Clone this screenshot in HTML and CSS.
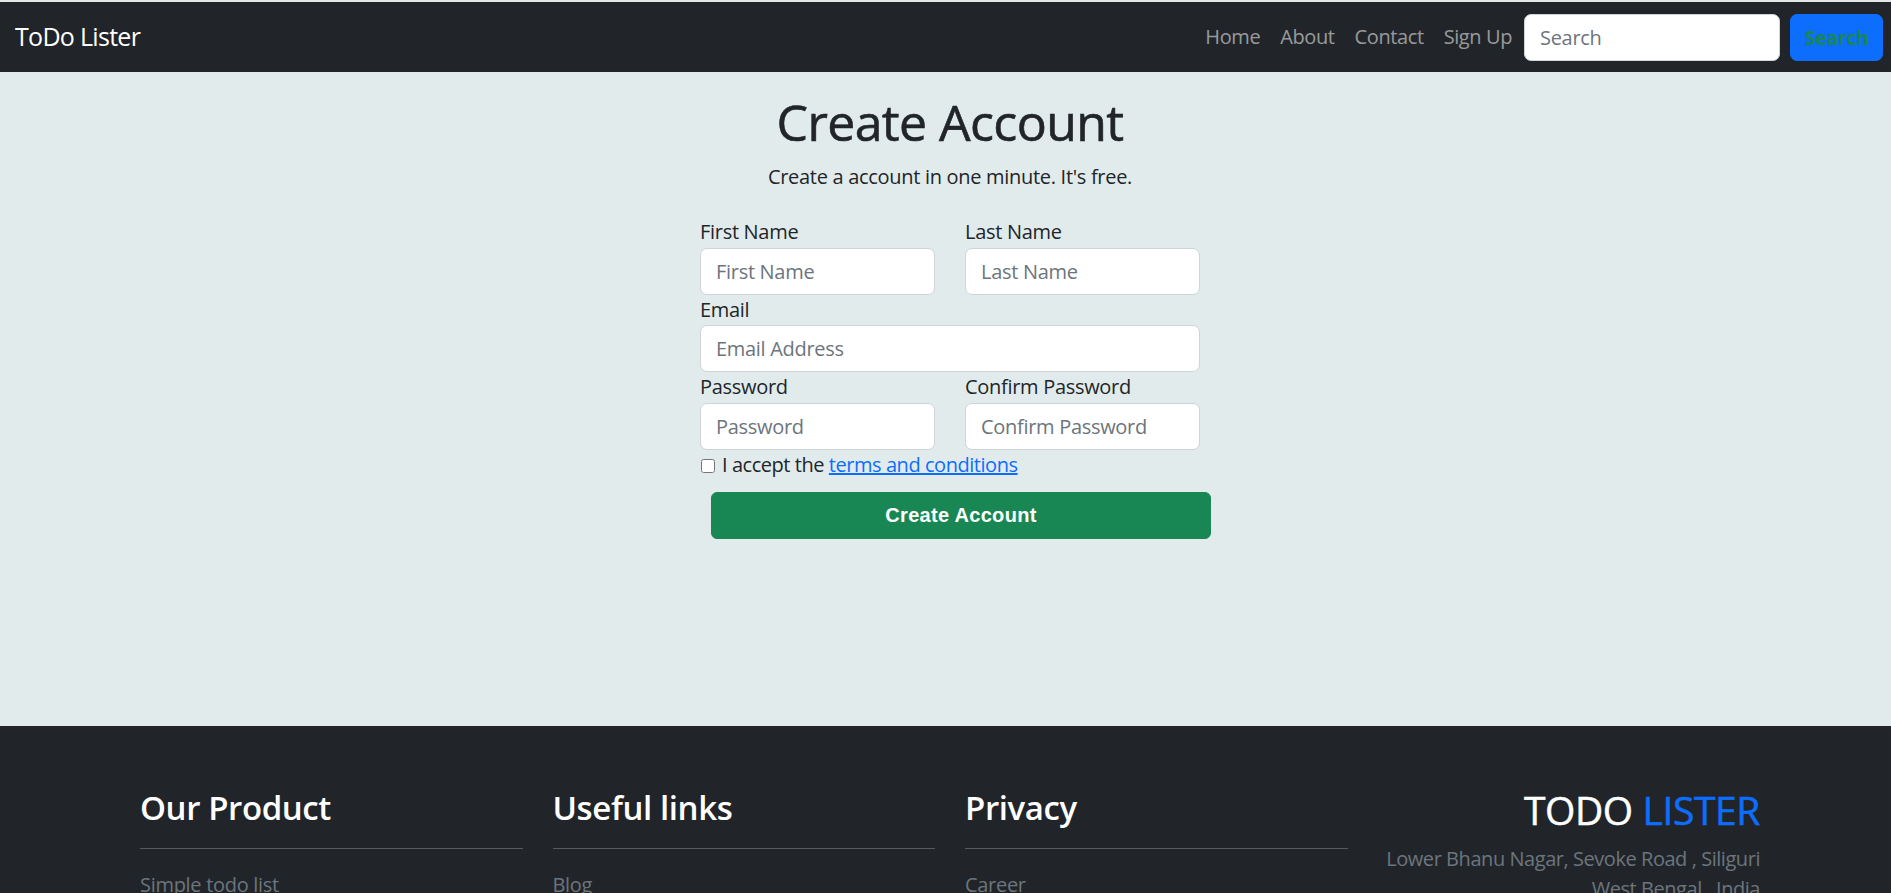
FILE: index.html
```html
<!DOCTYPE html>
<html lang="en">
<head>
<meta charset="utf-8">
<title>Sign Up - ToDo Lister</title>
<link rel="stylesheet" href="styles.css">
</head>
<body>
<div class="page">
  <nav class="navbar">
    <a class="brand" href="#">ToDo Lister</a>
    <div class="nav-right">
      <ul class="nav-links">
        <li><a href="#">Home</a></li>
        <li><a href="#">About</a></li>
        <li><a href="#">Contact</a></li>
        <li><a href="#">Sign Up</a></li>
      </ul>
      <form class="search">
        <input class="search-input" type="search" placeholder="Search">
        <button class="search-btn" type="button">Search</button>
      </form>
    </div>
  </nav>

  <main class="main">
    <h1 class="title">Create Account</h1>
    <p class="subtitle">Create a account in one minute. It's free.</p>
    <form class="signup">
      <div class="row">
        <div class="field">
          <label class="label">First Name</label>
          <input class="input" type="text" placeholder="First Name">
        </div>
        <div class="field">
          <label class="label">Last Name</label>
          <input class="input" type="text" placeholder="Last Name">
        </div>
      </div>
      <div class="field">
        <label class="label">Email</label>
        <input class="input" type="email" placeholder="Email Address">
      </div>
      <div class="row">
        <div class="field">
          <label class="label">Password</label>
          <input class="input" type="password" placeholder="Password">
        </div>
        <div class="field">
          <label class="label">Confirm Password</label>
          <input class="input" type="password" placeholder="Confirm Password">
        </div>
      </div>
      <div class="check">
        <input class="checkbox" type="checkbox">
        <span>I accept the <a class="terms" href="#">terms and conditions</a></span>
      </div>
      <button class="submit" type="button">Create Account</button>
    </form>
  </main>

  <footer class="footer">
    <div class="footer-inner">
      <div class="fcol">
        <h3 class="fhead">Our Product</h3>
        <hr class="fline">
        <ul class="flist">
          <li>Simple todo list</li>
          <li>Notes</li>
        </ul>
      </div>
      <div class="fcol">
        <h3 class="fhead">Useful links</h3>
        <hr class="fline">
        <ul class="flist">
          <li>Blog</li>
          <li>Help</li>
        </ul>
      </div>
      <div class="fcol">
        <h3 class="fhead">Privacy</h3>
        <hr class="fline">
        <ul class="flist">
          <li>Career</li>
          <li>Terms</li>
        </ul>
      </div>
      <div class="fcol fbrand">
        <h2 class="logo">TODO <span class="logo-blue">LISTER</span></h2>
        <p class="address">Lower Bhanu Nagar, Sevoke Road , Siliguri<br>West Bengal , India</p>
      </div>
    </div>
  </footer>
</div>
</body>
</html>
```

FILE: styles.css
```css
html {
  overflow: hidden;
}

body {
  margin: 0;
  font-family: "Open Sans", "Noto Sans", sans-serif;
  font-size: 20px;
  line-height: 1.5;
  letter-spacing: -0.3px;
  color: #212529;
  background: #e2ebec;
}

.page {
  width: 1900px;
}

/* ---------- navbar ---------- */
.navbar {
  box-sizing: border-box;
  height: 72px;
  border-top: 2px solid #e4e6e8;
  background: #212529;
  display: flex;
  align-items: center;
  justify-content: space-between;
  padding: 0 17px 0 15px;
}

.brand {
  color: #fff;
  text-decoration: none;
  font-size: 25px;
  line-height: 1.5;
  letter-spacing: -0.7px;
}

.nav-right {
  display: flex;
  align-items: center;
}

.nav-links {
  display: flex;
  list-style: none;
  margin: 0;
  padding: 0;
}

.nav-links a {
  display: block;
  padding: 8px 10px;
  color: rgba(255, 255, 255, 0.55);
  text-decoration: none;
  font-size: 20px;
  letter-spacing: -0.4px;
}

.search {
  display: flex;
  align-items: center;
  margin: 0 0 0 2px;
}

.search-input {
  box-sizing: border-box;
  width: 256px;
  height: 47px;
  padding: 0 15px;
  border: 1px solid #ced4da;
  border-radius: 7px;
  font-family: inherit;
  font-size: 20px;
  letter-spacing: -0.3px;
  color: #212529;
  background: #fff;
  margin-right: 10px;
}

.search-input::placeholder,
.input::placeholder {
  color: #6c757d;
}

.search-btn {
  box-sizing: border-box;
  height: 47px;
  width: 93px;
  padding: 0 10px;
  border: 1px solid #0d6efd;
  border-radius: 7px;
  background: #0d6efd;
  color: #198754;
  font-family: inherit;
  font-size: 20px;
  font-weight: 700;
  letter-spacing: -0.6px;
}

/* ---------- main ---------- */
.main {
  box-sizing: border-box;
  min-height: 654px;
  padding-top: 20px;
  display: flex;
  flex-direction: column;
  align-items: center;
}

.title {
  margin: 0 0 10px;
  font-size: 50px;
  line-height: 60px;
  font-weight: 400;
  letter-spacing: -0.6px;
  -webkit-text-stroke: 0.6px #212529;
}

.subtitle {
  margin: 0 0 25px;
  font-size: 20px;
  line-height: 30px;
}

.signup {
  width: 500px;
  display: flex;
  flex-direction: column;
}

.row {
  display: grid;
  grid-template-columns: 1fr 1fr;
  column-gap: 30px;
}

.field {
  display: flex;
  flex-direction: column;
}

.label {
  line-height: 30.5px;
}

.input {
  box-sizing: border-box;
  width: 100%;
  height: 47px;
  padding: 0 15px;
  border: 1px solid #ced4da;
  border-radius: 7px;
  background: #fff;
  font-family: inherit;
  font-size: 20px;
  letter-spacing: -0.3px;
  color: #212529;
}

.check {
  display: flex;
  align-items: center;
  height: 30px;
  margin-bottom: 12px;
  letter-spacing: -0.45px;
}

.checkbox {
  width: 14px;
  height: 14px;
  margin: 2px 7px 0 1px;
}

.terms {
  color: #0d6efd;
  text-decoration: underline;
}

.submit {
  box-sizing: border-box;
  width: 500px;
  height: 47px;
  margin-left: 11px;
  border: 1px solid #198754;
  border-radius: 6px;
  background: #198754;
  color: #fff;
  font-family: "Liberation Sans", Arial, sans-serif;
  font-size: 20px;
  font-weight: 700;
  letter-spacing: 0.3px;
}

/* ---------- footer ---------- */
.footer {
  background: #212529;
  min-height: 320px;
  padding-top: 60px;
}

.footer-inner {
  width: 1620px;
  margin: 0 auto;
  display: grid;
  grid-template-columns: repeat(4, 1fr);
  column-gap: 30px;
}

.fhead {
  margin: 2px 0 0;
  font-size: 33px;
  line-height: 1.2;
  font-weight: 600;
  color: #fff;
  letter-spacing: -0.4px;
}

.fline {
  margin: 20px 0 0;
  border: 0;
  border-top: 1px solid rgba(255, 255, 255, 0.25);
}

.flist {
  list-style: none;
  margin: 21px 0 0;
  padding: 0;
  color: #6c757d;
  line-height: 30px;
}

.fbrand {
  text-align: right;
}

.logo {
  margin: 1px 0 10px;
  font-size: 39px;
  line-height: 1.2;
  font-weight: 400;
  color: #fff;
  letter-spacing: -0.4px;
  -webkit-text-stroke: 0.5px currentColor;
}

.logo-blue {
  color: #0d6efd;
}

.address {
  margin: 0;
  color: #6c757d;
  line-height: 30px;
  font-size: 20px;
  letter-spacing: -0.45px;
  white-space: nowrap;
}
```
